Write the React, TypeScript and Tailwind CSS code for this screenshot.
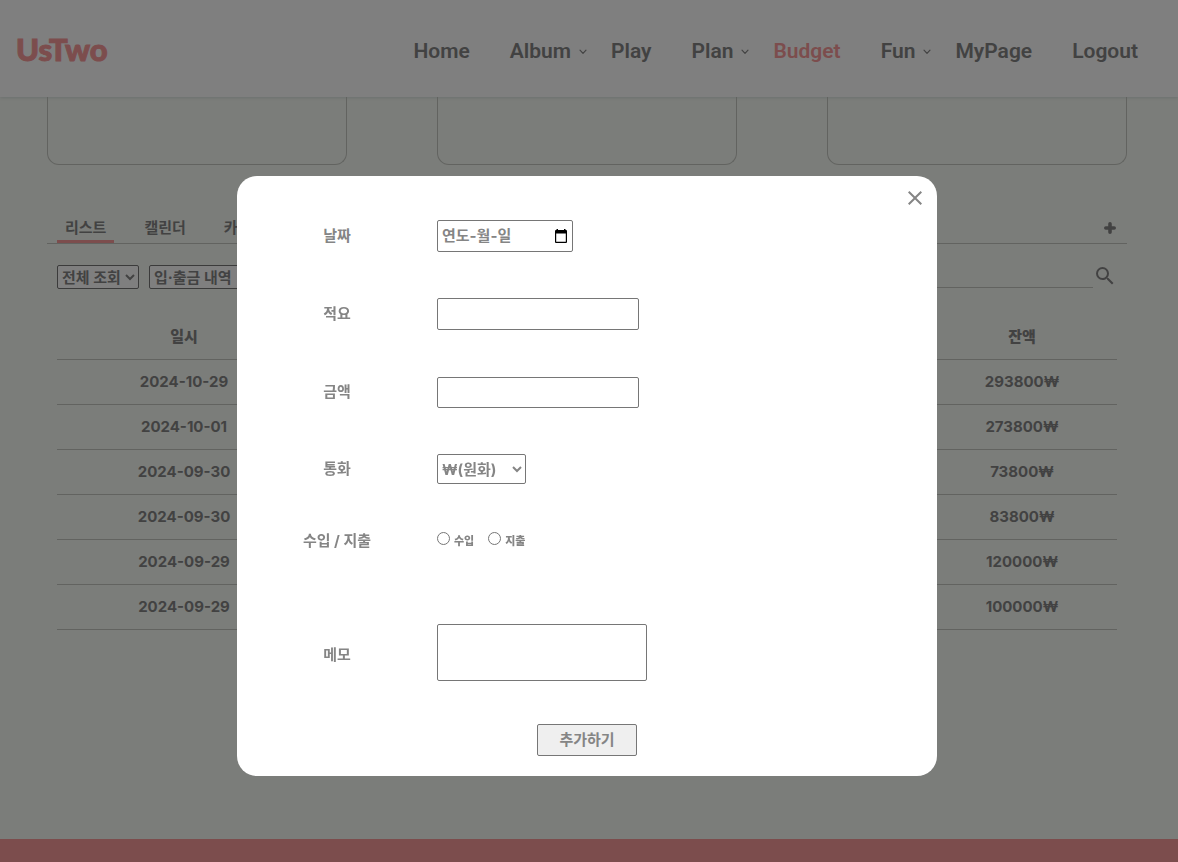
import { MdClose, MdSearch } from "react-icons/md";

type NavItem = { label: string; menu?: boolean; active?: boolean };

const navItems: NavItem[] = [
  { label: "Home" },
  { label: "Album", menu: true },
  { label: "Play" },
  { label: "Plan", menu: true },
  { label: "Budget", active: true },
  { label: "Fun", menu: true },
  { label: "MyPage" },
  { label: "Logout" },
];

const rows = [
  { date: "2024-10-29", balance: "293800₩" },
  { date: "2024-10-01", balance: "273800₩" },
  { date: "2024-09-30", balance: "73800₩" },
  { date: "2024-09-30", balance: "83800₩" },
  { date: "2024-09-29", balance: "120000₩" },
  { date: "2024-09-29", balance: "100000₩" },
];

function Chevron() {
  return (
    <svg viewBox="0 0 8 6" className="h-1.5 w-2" fill="none" stroke="currentColor" strokeWidth="1.2" aria-hidden="true">
      <path d="M1 1.2 4 4.3 7 1.2" strokeLinecap="round" strokeLinejoin="round" />
    </svg>
  );
}

function Header() {
  return (
    <header className="flex h-[97px] items-center justify-between bg-white pl-4 shadow-[0_1px_3px_rgba(80,110,130,0.18)]">
      <a
        href="#home"
        className="pt-px font-['Lato','Noto_Sans_CJK_KR',sans-serif] text-[31px] font-black text-[#f89b9b] [-webkit-text-stroke:1px_#f89b9b]"
      >
        UsTwo
      </a>
      <nav>
        <ul className="flex items-center pt-1.5 font-['Roboto','Noto_Sans_CJK_KR',sans-serif] text-[21px] font-semibold">
          {navItems.map((item) => (
            <li
              key={item.label}
              className={item.menu ? "flex items-center gap-2 pr-6" : "flex items-center pr-10"}
            >
              <a href={`#${item.label.toLowerCase()}`} className={item.active ? "text-[#f89b9b]" : ""}>
                {item.label}
              </a>
              {item.menu && <Chevron />}
            </li>
          ))}
        </ul>
      </nav>
    </header>
  );
}

function Budget() {
  return (
    <main className="mx-auto w-full max-w-[1084px] flex-1 pr-1">
      <div className="flex justify-between">
        {[0, 1, 2].map((n) => (
          <div key={n} className="h-[68px] w-[300px] rounded-b-xl border border-t-0 border-[#c4c7c1]" />
        ))}
      </div>

      <div className="mt-12 flex h-[31px] items-stretch justify-between border-b border-[#c4c7c1] px-2.5 text-[15px]">
        <div className="flex gap-[22px]">
          <button className="border-b-3 border-[#f89b9b] px-2 pt-1">리스트</button>
          <button className="border-b-3 border-transparent px-2 pt-1">캘린더</button>
          <button className="border-b-3 border-transparent px-2 pt-1">카테고리</button>
        </div>
        <button aria-label="내역 추가" className="px-px">
          <svg viewBox="0 0 12 12" className="size-3" stroke="currentColor" strokeWidth="3.6" strokeLinecap="round" aria-hidden="true">
            <path d="M6 1.8v8.4M1.8 6h8.4" />
          </svg>
        </button>
      </div>

      <div className="px-2.5">
        <div className="mt-[21px] flex h-6 items-center justify-between">
          <div className="flex gap-2.5">
            <select aria-label="조회 기간" className="h-6 w-[82px] rounded-xs border border-[#767676] bg-white text-[15px]">
              <option>전체 조회</option>
            </select>
            <select aria-label="내역 종류" className="h-6 w-[104px] rounded-xs border border-[#767676] bg-white text-[15px]">
              <option>입·출금 내역</option>
            </select>
          </div>
          <div className="flex h-6 items-start">
            <input aria-label="검색" className="h-[23px] w-[200px] border-b border-[#c4c7c1]" />
            <button aria-label="검색하기" className="-mt-px text-2xl">
              <MdSearch />
            </button>
          </div>
        </div>

        <table className="mt-[25px] w-full table-fixed text-center text-[15px]">
          <thead>
            <tr className="h-[45px] border-b border-[#c4c7c1]">
              <th className="w-[254px] pt-0.5 font-black">일시</th>
              <th />
              <th className="w-[190px] pt-0.5 font-black">잔액</th>
            </tr>
          </thead>
          <tbody>
            {rows.map((row, i) => (
              <tr key={i} className="h-[45px] border-b border-[#c4c7c1]">
                <td className="pt-0.5">{row.date}</td>
                <td />
                <td className="pt-0.5">{row.balance}</td>
              </tr>
            ))}
          </tbody>
        </table>
      </div>
    </main>
  );
}

const rowClass = "grid grid-cols-[200px_1fr] items-center";
const labelClass = "text-center";
const fieldClass = "rounded-xs border border-[#767676] bg-white";

function EntryDialog() {
  return (
    <div className="fixed inset-0 flex items-center justify-center bg-black/50 pt-[90px] pr-1">
      <form
        role="dialog"
        aria-label="내역 추가"
        className="relative flex h-[600px] w-[700px] flex-col rounded-[20px] bg-white pt-[21px] text-[15px] text-[#858585]"
      >
        <button type="button" aria-label="닫기" className="absolute top-2.5 right-2.5 text-2xl">
          <MdClose />
        </button>
        <div className={`${rowClass} h-[78px]`}>
          <label htmlFor="date" className={labelClass}>날짜</label>
          <div className={`${fieldClass} flex h-8 w-[136px] items-center justify-between px-1`}>
            <input id="date" placeholder="연도-월-일" className="w-[90px] placeholder:text-[#858585]" />
            <button type="button" aria-label="달력 열기" className="text-black">
              <svg viewBox="0 0 14 16" className="h-4 w-3.5" aria-hidden="true">
                <path
                  fill="currentColor"
                  fillRule="evenodd"
                  d="M2.5 1H4v1h6V1h1.5v1H12a1 1 0 0 1 1 1v11a1 1 0 0 1-1 1H2a1 1 0 0 1-1-1V3a1 1 0 0 1 1-1h.5zM2.2 5.5v8.3h9.6V5.5z"
                />
              </svg>
            </button>
          </div>
        </div>
        <div className={`${rowClass} h-[78px]`}>
          <label htmlFor="summary" className={labelClass}>적요</label>
          <input id="summary" className={`${fieldClass} h-8 w-[202px] px-1`} />
        </div>
        <div className={`${rowClass} h-[78px]`}>
          <label htmlFor="amount" className={labelClass}>금액</label>
          <input id="amount" className={`${fieldClass} h-[31px] w-[202px] px-1`} />
        </div>
        <div className={`${rowClass} h-[76px]`}>
          <label htmlFor="currency" className={labelClass}>통화</label>
          <select id="currency" className={`${fieldClass} h-[30px] w-[89px]`}>
            <option>₩(원화)</option>
          </select>
        </div>
        <div className={`${rowClass} h-[68px]`}>
          <span className={labelClass}>수입 / 지출</span>
          <div className="flex gap-3.5 text-[11px] font-black">
            <label className="flex items-center gap-1">
              <input type="radio" name="kind" className="mb-1.5 size-[13px]" />
              수입
            </label>
            <label className="flex items-center gap-1">
              <input type="radio" name="kind" className="mb-1.5 size-[13px]" />
              지출
            </label>
          </div>
        </div>
        <div className={`${rowClass} mt-[21px] h-28`}>
          <label htmlFor="memo" className={`${labelClass} pt-1.5`}>메모</label>
          <textarea id="memo" className={`${fieldClass} h-[57px] w-[210px] resize-none px-1`} />
        </div>
        <button type="submit" className="mt-4 h-8 w-[100px] self-center rounded-xs border border-[#767676] bg-[#efefef]">
          추가하기
        </button>
      </form>
    </div>
  );
}

export default function App() {
  return (
    <div className="flex min-h-screen flex-col bg-[#f7faf4] font-['Inter','Noto_Sans_CJK_KR',sans-serif] font-bold text-[#858585]">
      <Header />
      <Budget />
      <footer className="h-[23px] bg-[#f89b9b]" />
      <EntryDialog />
    </div>
  );
}
